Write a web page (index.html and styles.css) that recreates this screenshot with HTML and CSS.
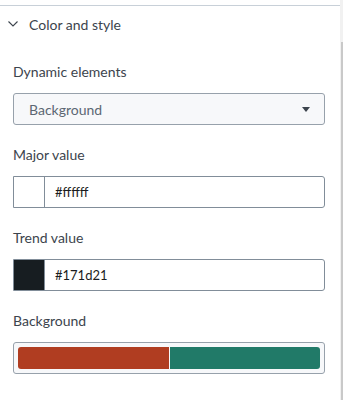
FILE: index.html
```html
<!DOCTYPE html>
<html>
<head>
<meta charset="utf-8">
<link rel="stylesheet" href="styles.css">
</head>
<body>
<div class="page">
  <div class="panel">
    <div class="section-head">
      <svg class="chev" width="10" height="6" viewBox="0 0 10 6"><path d="M0.5 0.5 L5 5 L9.5 0.5" fill="none" stroke="#3c444d" stroke-width="1.1"/></svg>
      <span class="head-title">Color and style</span>
    </div>
    <div class="content">
      <div class="field">
        <div class="label">Dynamic elements</div>
        <div class="select">
          <span class="select-text">Background</span>
          <svg class="caret" width="8" height="5" viewBox="0 0 8 5"><path d="M0 0 H8 L4 5 Z" fill="#3c444d"/></svg>
        </div>
      </div>
      <div class="field">
        <div class="label">Major value</div>
        <div class="color-input">
          <div class="swatch swatch-white"></div>
          <span class="color-text">#ffffff</span>
        </div>
      </div>
      <div class="field">
        <div class="label">Trend value</div>
        <div class="color-input">
          <div class="swatch swatch-dark"></div>
          <span class="color-text">#171d21</span>
        </div>
      </div>
      <div class="field">
        <div class="label">Background</div>
        <div class="palette">
          <div class="pal pal-red"></div>
          <div class="pal pal-green"></div>
        </div>
      </div>
    </div>
  </div>
  <div class="scrollbar"><div class="thumb"></div></div>
</div>
</body>
</html>
```
FILE: styles.css
```css
html, body {
  margin: 0;
  padding: 0;
  background: #ffffff;
}
body {
  font-family: Lato, "Open Sans", sans-serif;
  color: #3c444d;
  width: 343px;
  height: 400px;
  overflow: hidden;
}
.page {
  display: flex;
  height: 400px;
}
.panel {
  width: 340px;
  padding-top: 5px;
  box-sizing: border-box;
}
.section-head {
  border-top: 1px solid #c8d0d8;
  height: 36px;
  display: flex;
  align-items: center;
  padding-left: 8px;
}
.chev {
  display: block;
  margin-right: 11px;
}
.head-title {
  font-size: 14px;
  color: #3c444d;
}
.content {
  padding: 20px 15px 0 13px;
  display: flex;
  flex-direction: column;
  gap: 20px;
}
.label {
  font-size: 14px;
  line-height: 20px;
  margin-bottom: 11px;
  color: #3c444d;
}
.select {
  height: 32px;
  box-sizing: border-box;
  border: 1px solid #97a1ab;
  border-radius: 3px;
  background: #f7f8fa;
  display: flex;
  align-items: center;
  justify-content: space-between;
  padding: 0 14px 0 15px;
}
.select-text {
  font-size: 14px;
  color: #5c6773;
}
.caret {
  display: block;
}
.color-input {
  height: 32px;
  box-sizing: border-box;
  border: 1px solid #818d99;
  border-radius: 0 3px 3px 0;
  display: flex;
  align-items: center;
  background: #fff;
}
.swatch {
  width: 31px;
  height: 30px;
  border-right: 1px solid #818d99;
  box-sizing: border-box;
  margin-right: 10px;
}
.swatch-white { background: #ffffff; }
.swatch-dark { background: #171d21; }
.color-text {
  font-size: 13px;
  color: #1a1c20;
}
.palette {
  height: 32px;
  box-sizing: border-box;
  border: 1px solid #97a1ab;
  border-radius: 3px;
  background: #f7f8fa;
  padding: 4px;
  display: flex;
  gap: 1px;
}
.pal {
  flex: 1;
  height: 22px;
}
.pal-red {
  background: #b03d21;
  border-radius: 3px 0 0 3px;
}
.pal-green {
  background: #217a68;
  border-radius: 0 3px 3px 0;
}
.scrollbar {
  width: 3px;
  background: #f1f1f1;
  display: flex;
  justify-content: flex-end;
}
.thumb {
  width: 2px;
  margin-top: 42px;
  height: 358px;
  background: #c9c9c9;
}
```
